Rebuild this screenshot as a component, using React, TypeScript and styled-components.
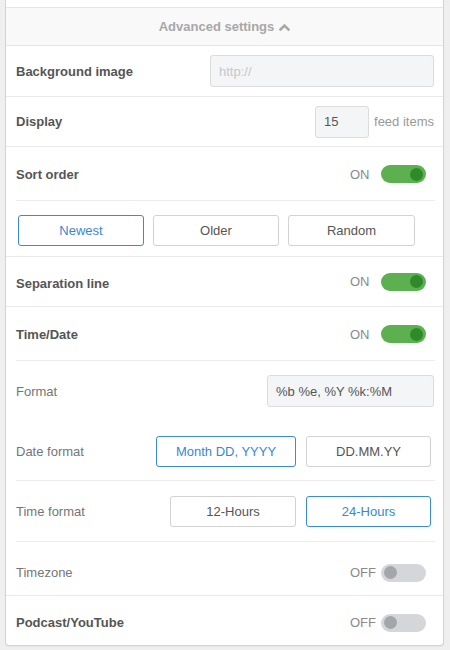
import React from "react";
import styled, { createGlobalStyle } from "styled-components";

const Global = createGlobalStyle`
  html, body { margin: 0; padding: 0; background: #efefef; }
  body { font-family: "Liberation Sans", Arial, sans-serif; font-size: 13px; color: #555; }
  * { box-sizing: border-box; }
`;

const Panel = styled.div`
  margin: 0 6px 5px 5px;
  background: #fff;
  border: 1px solid #d3d3d3;
  border-top: none;
  border-radius: 0 0 4px 4px;
  box-shadow: 0 1px 1px rgba(0,0,0,0.04);
`;

const TopStrip = styled.div`
  height: 8px;
  border-bottom: 1px solid #e6e6e6;
`;

const Header = styled.div`
  height: 38px;
  background: #f9f9f9;
  border-bottom: 1px solid #e6e6e6;
  display: flex;
  align-items: center;
  justify-content: center;
  gap: 5px;
  padding-left: 0;
  font-weight: bold;
  font-size: 13px;
  color: #a8a8a8;
`;

type Divider = "full" | "inset" | "none";

const Row = styled.div<{ $h: number; $div: Divider; $pt?: number }>`
  height: ${(p) => p.$h}px;
  display: flex;
  align-items: center;
  padding: ${(p) => p.$pt ?? 0}px 9px 0 10px;
  position: relative;
  border-bottom: ${(p) => (p.$div === "full" ? "1px solid #e9e9e9" : "none")};
  ${(p) =>
    p.$div === "inset"
      ? `&::after { content: ""; position: absolute; left: 10px; right: 8px; bottom: 0; height: 1px; background: #ececec; }`
      : ""}
`;

const Label = styled.div<{ $bold?: boolean; $dy?: number }>`
  flex: 1;
  font-size: 13px;
  font-weight: ${(p) => (p.$bold ? "bold" : "normal")};
  color: ${(p) => (p.$bold ? "#555" : "#757575")};
  position: relative;
  top: ${(p) => p.$dy ?? 0}px;
`;

const Input = styled.div<{ $w: number; $placeholder?: boolean }>`
  width: ${(p) => p.$w}px;
  height: 32px;
  background: #f4f5f6;
  border: 1px solid #dcdcdc;
  border-radius: 3px;
  display: flex;
  align-items: center;
  padding-left: 8px;
  font-size: 13px;
  color: ${(p) => (p.$placeholder ? "#c8c8c8" : "#555")};
`;

const Suffix = styled.span`
  margin-left: 5px;
  color: #999;
  font-size: 13px;
`;

const ToggleWrap = styled.div`
  display: flex;
  align-items: center;
  margin-right: 8px;
`;

const ToggleText = styled.span`
  width: 31px;
  color: #8a8a8a;
  font-size: 13px;
`;

const Track = styled.div<{ $on: boolean }>`
  width: 45px;
  height: 18px;
  border-radius: 9px;
  background: ${(p) => (p.$on ? "#5cb050" : "#d4d6da")};
  display: flex;
  align-items: center;
  justify-content: ${(p) => (p.$on ? "flex-end" : "flex-start")};
  padding: 0 3px;
`;

const Knob = styled.div<{ $on: boolean }>`
  width: 13px;
  height: 13px;
  border-radius: 50%;
  background: ${(p) => (p.$on ? "#2f8a2c" : "#a3a6ab")};
`;

const Toggle = ({ on }: { on: boolean }) => (
  <ToggleWrap>
    <ToggleText>{on ? "ON" : "OFF"}</ToggleText>
    <Track $on={on}>
      <Knob $on={on} />
    </Track>
  </ToggleWrap>
);

const ButtonRow = styled.div`
  height: 56px;
  display: grid;
  grid-template-columns: 126px 126px 127px;
  column-gap: 9px;
  padding: 14px 0 0 12px;
  border-bottom: 1px solid #e9e9e9;
`;

const Choices = styled.div`
  display: flex;
  gap: 10px;
  margin-right: 3px;
`;

const Choice = styled.div<{ $active?: boolean; $w?: number }>`
  width: ${(p) => (p.$w ? `${p.$w}px` : "auto")};
  height: 31px;
  border: 1px solid ${(p) => (p.$active ? "#3a8ad6" : "#d2d2d2")};
  border-radius: 3px;
  background: #fff;
  display: flex;
  align-items: center;
  justify-content: center;
  font-size: 13px;
  color: ${(p) => (p.$active ? "#3a87d1" : "#555")};
`;

const Chevron = () => (
  <svg width="11" height="8" viewBox="0 0 11 8">
    <polyline points="1.5,6.5 5.5,2.5 9.5,6.5" fill="none" stroke="#a8a8a8" strokeWidth="2.6" strokeLinecap="square" />
  </svg>
);

export default function App() {
  return (
    <>
      <Global />
      <Panel>
        <TopStrip />
        <Header>
          Advanced settings <Chevron />
        </Header>
        <Row $h={51} $div="full">
          <Label $bold>Background image</Label>
          <Input $w={224} $placeholder>http://</Input>
        </Row>
        <Row $h={50} $div="full">
          <Label $bold>Display</Label>
          <Input $w={54}>15</Input>
          <Suffix>feed items</Suffix>
        </Row>
        <Row $h={54} $div="inset">
          <Label $bold>Sort order</Label>
          <Toggle on />
        </Row>
        <ButtonRow>
          <Choice $active>Newest</Choice>
          <Choice>Older</Choice>
          <Choice>Random</Choice>
        </ButtonRow>
        <Row $h={50} $div="full">
          <Label $bold $dy={2}>Separation line</Label>
          <Toggle on />
        </Row>
        <Row $h={54} $div="inset">
          <Label $bold>Time/Date</Label>
          <Toggle on />
        </Row>
        <Row $h={60} $div="none">
          <Label>Format</Label>
          <Input $w={167}>%b %e, %Y %k:%M</Input>
        </Row>
        <Row $h={60} $div="inset">
          <Label>Date format</Label>
          <Choices>
            <Choice $active $w={140}>Month DD, YYYY</Choice>
            <Choice $w={125}>DD.MM.YY</Choice>
          </Choices>
        </Row>
        <Row $h={61} $div="inset">
          <Label>Time format</Label>
          <Choices>
            <Choice $w={126}>12-Hours</Choice>
            <Choice $active $w={125}>24-Hours</Choice>
          </Choices>
        </Row>
        <Row $h={54} $div="full" $pt={8}>
          <Label>Timezone</Label>
          <Toggle on={false} />
        </Row>
        <Row $h={49} $div="none" $pt={4}>
          <Label $bold>Podcast/YouTube</Label>
          <Toggle on={false} />
        </Row>
      </Panel>
    </>
  );
}
